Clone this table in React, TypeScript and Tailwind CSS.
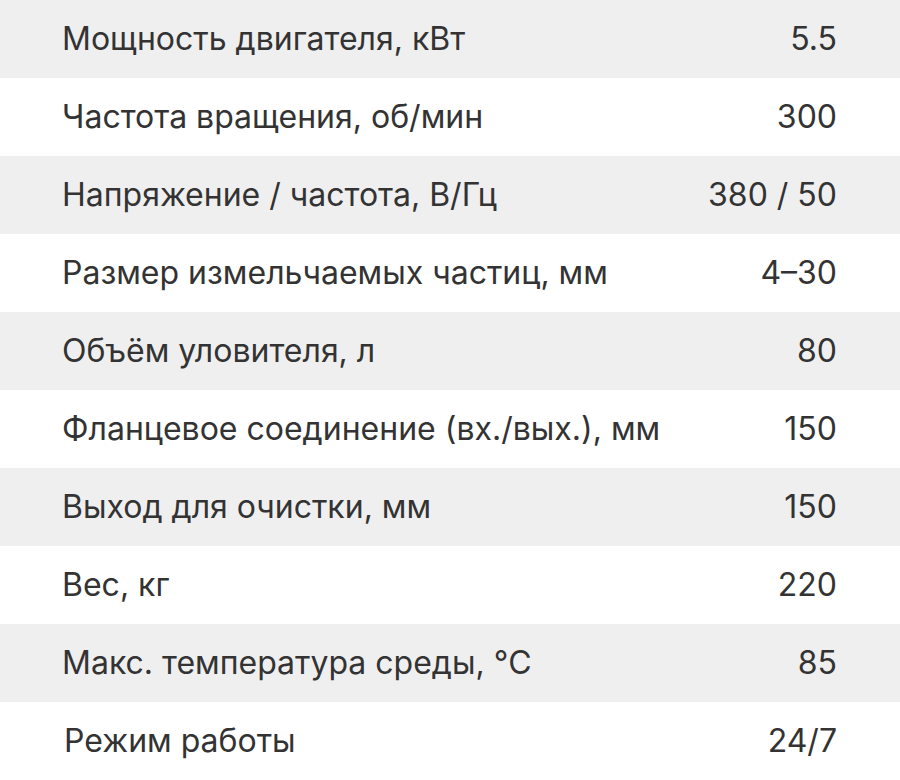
const specs: [string, string][] = [
  ["Мощность двигателя, кВт", "5.5"],
  ["Частота вращения, об/мин", "300"],
  ["Напряжение / частота, В/Гц", "380 / 50"],
  ["Размер измельчаемых частиц, мм", "4–30"],
  ["Объём уловителя, л", "80"],
  ["Фланцевое соединение (вх./вых.), мм", "150"],
  ["Выход для очистки, мм", "150"],
  ["Вес, кг", "220"],
  ["Макс. температура среды, °C", "85"],
  ["Режим работы", "24/7"],
];

export default function App() {
  return (
    <div className="w-[900px] bg-white font-['Inter',sans-serif] text-[32px] leading-none text-[#333333]">
      {specs.map(([label, value], i) => (
        <div
          key={label}
          className={`flex h-[78px] items-center justify-between pr-[63px] ${
            i % 2 === 0 ? "bg-[#efefef]" : "bg-white"
          } ${i === specs.length - 1 ? "pl-[64px]" : "pl-[62px]"}`}
        >
          <span>{label}</span>
          <span>{value}</span>
        </div>
      ))}
    </div>
  );
}
